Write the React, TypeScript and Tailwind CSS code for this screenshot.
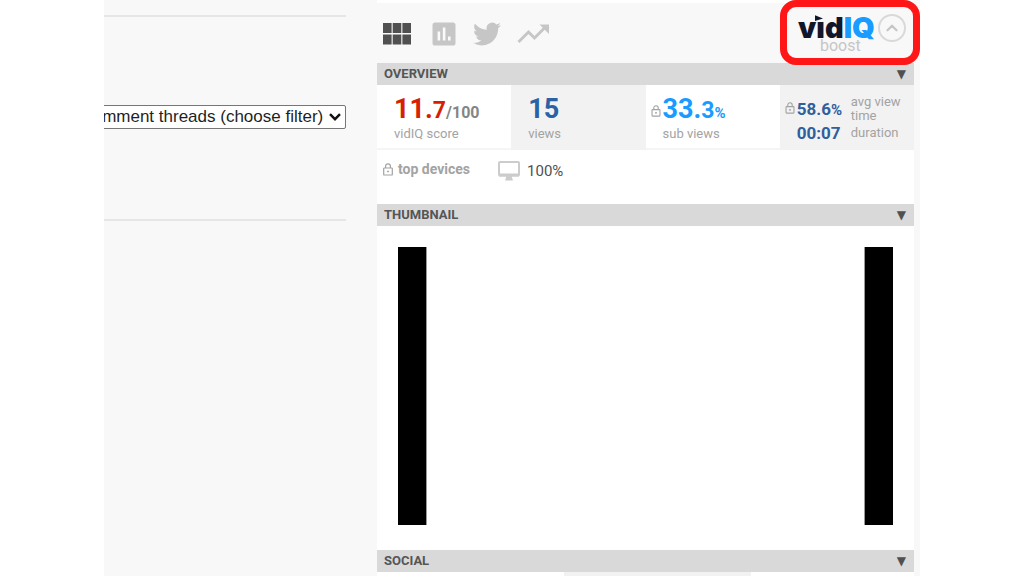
import React, { useState } from 'react'
import { ChevronUp } from 'lucide-react'

const font = "font-['Roboto',sans-serif]"

function LockIcon({ className }: { className?: string }) {
  return (
    <svg viewBox="0 0 10 13" className={className} fill="none" stroke="#a3a3a3" aria-hidden="true">
      <rect x="0.7" y="5" width="8.6" height="7" rx="0.6" strokeWidth="1.2" />
      <path d="M2.6 5V3.2a2.4 2.4 0 0 1 4.8 0V5" strokeWidth="1.2" />
      <circle cx="5" cy="8.5" r="0.6" fill="#a3a3a3" />
    </svg>
  )
}

const tabs = [
  {
    label: 'Grid',
    className: 'w-7 h-[22px] ml-0',
    icon: (
      <svg viewBox="0 0 28 22" className="w-full h-full" fill="#505050">
        <path d="M0 0h8.6v10H0zM9.7 0h8.6v10H9.7zM19.4 0H28v10h-8.6zM0 11.6h8.6v10H0zM9.7 11.6h8.6v10H9.7zM19.4 11.6H28v10h-8.6z" />
      </svg>
    ),
  },
  {
    label: 'Stats',
    className: 'w-6 h-6 ml-[21px]',
    icon: (
      <svg viewBox="0 0 24 24" className="w-full h-full">
        <rect x="0.5" y="0.5" width="23" height="23" rx="2.6" fill="#c6c6c6" />
        <path d="M5.6 9.5h2.6v9H5.6zM10.8 5.5h2.6v13h-2.6zM16 14.5h2.6v4H16z" fill="#fafafa" />
      </svg>
    ),
  },
  {
    label: 'Twitter',
    className: 'w-7 h-6 ml-[17px]',
    icon: (
      <svg viewBox="0 2 24 20" className="w-full h-full" fill="#c6c6c6">
        <path d="M23.953 4.57a10 10 0 01-2.825.775 4.958 4.958 0 002.163-2.723c-.951.555-2.005.959-3.127 1.184a4.92 4.92 0 00-8.384 4.482C7.69 8.095 4.067 6.13 1.64 3.162a4.822 4.822 0 00-.666 2.475c0 1.71.87 3.213 2.188 4.096a4.904 4.904 0 01-2.228-.616v.06a4.923 4.923 0 003.946 4.827 4.996 4.996 0 01-2.212.085 4.936 4.936 0 004.604 3.417 9.867 9.867 0 01-6.102 2.105c-.39 0-.779-.023-1.17-.067a13.995 13.995 0 007.557 2.209c9.053 0 13.998-7.496 13.998-13.985 0-.21 0-.42-.015-.63A9.935 9.935 0 0024 4.59z" />
      </svg>
    ),
  },
  {
    label: 'Trends',
    className: 'w-8 h-5 ml-4',
    icon: (
      <svg viewBox="0 0 32 20" className="w-full h-full">
        <path d="M1.5 18 11.5 8l6 6L28 3.5" fill="none" stroke="#c6c6c6" strokeWidth="3" />
        <path d="M22.5 0.5H32V10z" fill="#c6c6c6" />
      </svg>
    ),
  },
]

function SectionHeader({ title }: { title: string }) {
  return (
    <button
      type="button"
      className="flex w-full h-[22px] items-center justify-between bg-[#d9d9d9] pl-[7px] pr-2 text-[13px] leading-[22px] font-bold text-[#555555]"
    >
      <span>{title}</span>
      <span className="font-['DejaVu_Sans',sans-serif] text-[12px] font-normal text-[#505050]">▼</span>
    </button>
  )
}

function Logo() {
  return (
    <div className="relative flex items-start">
      {/* highlight frame */}
      <div className="absolute -top-[14px] -left-[18px] -right-[14px] h-[65px] rounded-[16px] border-[7px] border-[#ff1616]" />
      <div className="relative h-[42px] w-[78px]">
        <div className="font-['Inter',sans-serif] text-[29px] leading-[28px] font-black text-[#12162a]">
          vid<span className="text-[#1a9bff]">IQ</span>
        </div>
        {/* flag in place of the dot on the i */}
        <svg viewBox="0 0 10 8" className="absolute left-4 top-0 w-[10px] h-2" aria-hidden="true">
          <path d="M0 0h10v8H0z" fill="#f8f8f8" />
          <path d="M1 1.2 9 4.4 1 7z" fill="#12162a" />
        </svg>
        <div className="absolute left-[22px] top-[23px] text-[16px] leading-[18px] text-[#c6c6c6]">boost</div>
      </div>
      <button
        type="button"
        aria-label="Collapse"
        className="relative ml-[2px] flex h-7 w-7 items-center justify-center rounded-full border-2 border-[#d9d9d9]"
      >
        <ChevronUp className="h-[18px] w-[18px] text-[#c6c6c6]" strokeWidth={3} />
      </button>
    </div>
  )
}

export default function App() {
  const [filter, setFilter] = useState('all')

  return (
    <div className={`h-screen overflow-hidden bg-white px-[104px] ${font}`}>
      <main className="flex h-full bg-[#f8f8f8]">
        {/* Comment filter column */}
        <section className="w-[242px] shrink-0 pt-[15px]">
          <div className="flex h-[206px] items-start justify-end overflow-hidden border-y-2 border-[#e6e6e6] pt-[88px]">
            <div className="relative shrink-0">
              <select
                aria-label="Comment filter"
                value={filter}
                onChange={(e) => setFilter(e.target.value)}
                className="h-6 appearance-none rounded-[2px] border border-[#767676] bg-white pl-1 pr-[21px] font-['Liberation_Sans',sans-serif] text-[17px] leading-[22px] text-[#1f1f1f]"
              >
                <option value="all">0 comment threads (choose filter)</option>
              </select>
              <svg viewBox="0 0 12 8" className="pointer-events-none absolute right-[5px] top-2 w-3 h-2" aria-hidden="true">
                <path d="M1 1.2 6 6.2l5-5" fill="none" stroke="#111111" strokeWidth="2.4" />
              </svg>
            </div>
          </div>
        </section>

        {/* Extension panel */}
        <aside className="ml-[31px] mr-[6px] min-w-0 flex-1">
          <div className="h-[3px] bg-white" />
          <header className="flex h-[60px] items-start justify-between pl-[6px] pr-2 pt-[11px]">
            <nav className="flex h-10 items-center">
              {tabs.map((tab) => (
                <button key={tab.label} type="button" aria-label={tab.label} className={tab.className}>
                  {tab.icon}
                </button>
              ))}
            </nav>
            <Logo />
          </header>

          <SectionHeader title="OVERVIEW" />
          <div className="bg-white">
            <div className="grid h-[65px] grid-cols-4 text-[13px] text-[#a3a3a3]">
              <div className="border-b-2 border-[#f5f5f5] pl-[17px] pt-2">
                <div className="h-8 text-[27px] leading-8 font-bold text-[#d61f05]">
                  11.<span className="text-[23px]">7</span>
                  <span className="text-[16px] text-[#858585]">/100</span>
                </div>
                <div className="leading-[18px]">vidIQ score</div>
              </div>
              <div className="bg-[#f2f2f2] pl-[17px] pt-2">
                <div className="h-8 text-[27px] leading-8 font-bold text-[#2a62a5]">15</div>
                <div className="leading-[18px]">views</div>
              </div>
              <div className="border-b-2 border-[#f5f5f5] pl-[5px] pt-2">
                <div className="flex h-8 items-start">
                  <LockIcon className="mr-[2px] mt-3 h-3 w-[10px]" />
                  <span className="text-[27px] leading-8 font-bold text-[#1a9bff]">
                    33.<span className="text-[23px]">3</span>
                    <span className="text-[15px]">%</span>
                  </span>
                </div>
                <div className="pl-3 leading-[18px]">sub views</div>
              </div>
              <div className="flex bg-[#f2f2f2] pl-[5px] pt-3">
                <LockIcon className="mr-[2px] mt-[5px] h-3 w-[10px]" />
                <div className="w-[54px] text-[17px] leading-6 font-bold text-[#2f5f9d]">
                  <div className="h-6">
                    58.6<span className="text-[15px]">%</span>
                  </div>
                  <div>00:07</div>
                </div>
                <div className="-mt-[2px] leading-[14px]">
                  <div>avg view</div>
                  <div>time</div>
                  <div className="mt-[3px]">duration</div>
                </div>
              </div>
            </div>

            <div className="flex h-[54px] items-start pl-[6px] pt-[10px]">
              <LockIcon className="mt-[3px] h-[13px] w-[10px]" />
              <span className="ml-[5px] text-[14px] leading-[18px] font-bold text-[#a3a3a3]">top devices</span>
              <svg viewBox="0 0 22 20" className="ml-7 mt-[1px] h-5 w-[22px]" aria-hidden="true">
                <rect x="1" y="1" width="20" height="13.5" rx="1" fill="none" stroke="#cccccc" strokeWidth="2" />
                <path d="M1 12.5h20v3H1zM8.5 15h5l1.5 4.5H7z" fill="#cccccc" />
              </svg>
              <span className="ml-[7px] mt-[1px] text-[15px] leading-5 text-[#505050]">100%</span>
            </div>
          </div>

          <SectionHeader title="THUMBNAIL" />
          <div className="bg-white px-[21px] pt-[21px] pb-[25px]">
            <div className="flex h-[278px] justify-between">
              <div className="w-[29px] border-r border-[#999999] bg-black" />
              <div className="w-[29px] border-l border-[#999999] bg-black" />
            </div>
          </div>

          <SectionHeader title="SOCIAL" />
          <div className="grid h-[65px] grid-cols-[187fr_187fr_163fr] bg-white">
            <div />
            <div className="bg-[#f2f2f2]" />
            <div />
          </div>
        </aside>
      </main>
    </div>
  )
}
